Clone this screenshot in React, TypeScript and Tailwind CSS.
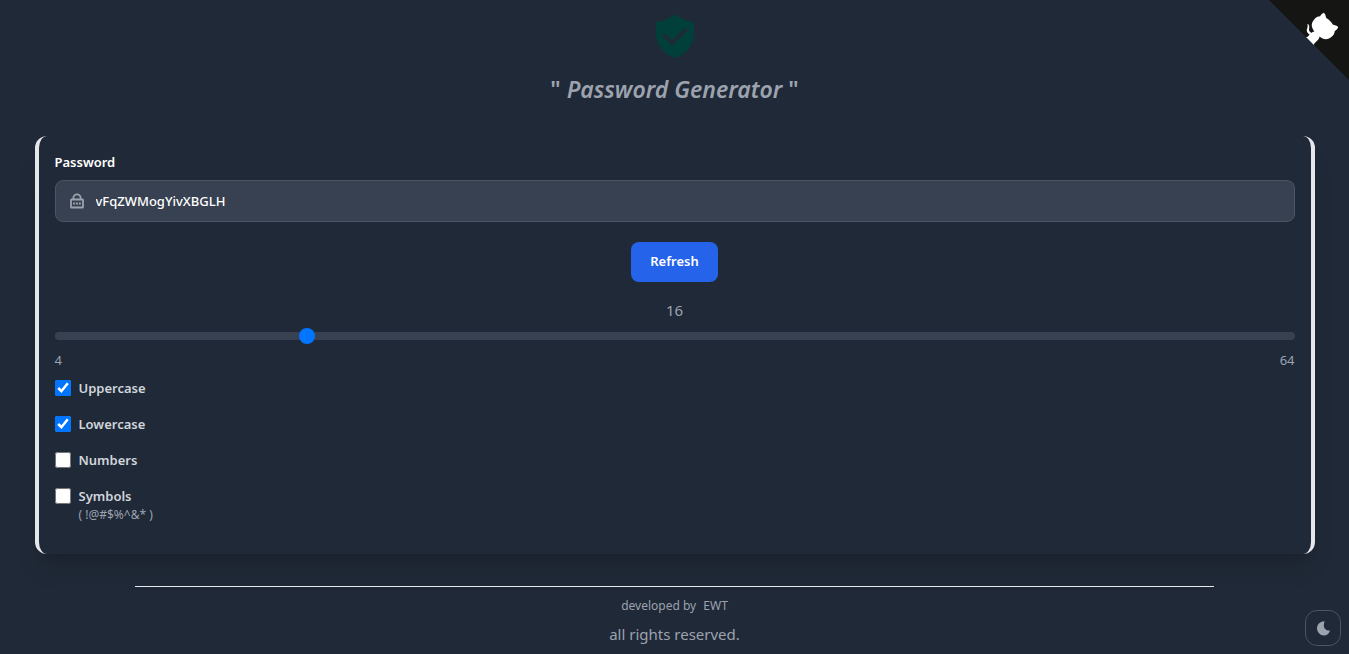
import { useState } from "react";

const UPPER = "ABCDEFGHIJKLMNOPQRSTUVWXYZ";
const LOWER = "abcdefghijklmnopqrstuvwxyz";
const DIGITS = "0123456789";
const SYMBOLS = "!@#$%^&*";

type OptionKey = "uppercase" | "lowercase" | "numbers" | "symbols";
type Options = Record<OptionKey, boolean>;

const OPTIONS: { key: OptionKey; label: string; hint?: string }[] = [
  { key: "uppercase", label: "Uppercase" },
  { key: "lowercase", label: "Lowercase" },
  { key: "numbers", label: "Numbers" },
  { key: "symbols", label: "Symbols", hint: "( !@#$%^&* )" },
];

function generate(length: number, options: Options) {
  const pool =
    (options.uppercase ? UPPER : "") +
    (options.lowercase ? LOWER : "") +
    (options.numbers ? DIGITS : "") +
    (options.symbols ? SYMBOLS : "");
  if (!pool) return "";
  return Array.from({ length }, () => pool[Math.floor(Math.random() * pool.length)]).join("");
}

function GithubCorner() {
  return (
    <a href="#github" aria-label="View source on GitHub" className="absolute top-0 right-0">
      <svg width="80" height="80" viewBox="0 0 250 250" className="fill-[#151513] text-white" aria-hidden="true">
        <path d="M0,0 L115,115 L130,115 L142,142 L250,250 L250,0 Z" />
        <path
          fill="currentColor"
          d="M128.3,109.0 C113.8,99.7 119.0,89.6 119.0,89.6 C122.0,82.7 120.5,78.6 120.5,78.6 C119.2,72.0 123.4,76.3 123.4,76.3 C127.3,80.9 125.5,87.3 125.5,87.3 C122.9,97.6 130.6,101.9 134.4,103.2"
        />
        <path
          fill="currentColor"
          d="M115.0,115.0 C114.9,115.1 118.7,116.5 119.8,115.4 L133.7,101.6 C136.9,99.2 139.9,98.4 142.2,98.6 C133.8,88.0 127.5,74.4 143.8,58.0 C148.5,53.4 154.0,51.2 159.7,51.0 C160.3,49.4 163.2,43.6 171.4,40.1 C171.4,40.1 176.1,42.5 178.8,56.2 C183.1,58.6 187.2,61.8 190.9,65.4 C194.5,69.0 197.7,73.2 200.1,77.6 C213.8,80.2 216.3,84.9 216.3,84.9 C212.7,93.1 206.9,96.0 205.4,96.6 C205.1,102.4 203.0,107.8 198.3,112.5 C181.9,128.9 168.3,122.5 157.7,114.1 C157.9,116.9 156.7,120.9 152.7,124.9 L141.0,136.5 C139.8,137.7 141.6,141.9 141.8,141.8 Z"
        />
      </svg>
    </a>
  );
}

function ShieldIcon() {
  return (
    <svg width="38" height="44" viewBox="0 0 38 44" className="text-[#003f3a]" aria-hidden="true">
      <path
        fill="currentColor"
        fillRule="evenodd"
        d="M19 0 C24 4 31 7.6 37 8 C37.8 8 38 8.6 38 9.2 V19 C38 31 30 40.5 19 44 C8 40.5 0 31 0 19 V9.2 C0 8.6 .2 8 1 8 C7 7.6 14 4 19 0 Z M28.1 14.4 L15.8 26.4 L10.1 20.4 C9.3 19.6 8.2 19.6 7.4 20.4 C6.7 21.2 6.7 22.3 7.4 23.1 L15.8 31.4 L30.6 17.1 C31.4 16.3 31.4 15.2 30.6 14.4 C29.8 13.7 28.8 13.7 28.1 14.4 Z"
      />
    </svg>
  );
}

function LockIcon() {
  return (
    <svg width="14" height="16" viewBox="0 0 14 16" fill="none" stroke="currentColor" strokeWidth="1.8" aria-hidden="true">
      <rect x="1" y="6.5" width="12" height="8" rx="0.6" />
      <path d="M3.4 6.5 V4.8 A3.6 3.4 0 0 1 10.6 4.8 V6.5" />
      <path d="M3.2 10.5 h1.9 M6.05 10.5 h1.9 M8.9 10.5 h1.9" />
    </svg>
  );
}

function MoonIcon() {
  return (
    <svg width="13" height="15" viewBox="0 0 13 15" fill="currentColor" aria-hidden="true">
      <path d="M7.8 .2 C3.4 .1 0 3.3 0 7.3 C0 11.3 3.2 14.5 7 14.5 C9.8 14.5 12.1 12.7 13 9.5 C9.4 9.9 6.8 7.4 6.8 4.4 C6.8 2.7 7.2 1.3 7.8 .2 Z" />
    </svg>
  );
}

export default function App() {
  const [length, setLength] = useState(16);
  const [options, setOptions] = useState<Options>({
    uppercase: true,
    lowercase: true,
    numbers: false,
    symbols: false,
  });
  const [password, setPassword] = useState("vFqZWMogYivXBGLH");

  const changeLength = (next: number) => {
    setLength(next);
    setPassword(generate(next, options));
  };

  const toggle = (key: OptionKey) => {
    const next = { ...options, [key]: !options[key] };
    setOptions(next);
    setPassword(generate(length, next));
  };

  return (
    <div className="relative min-h-screen bg-[#202937] pt-3.5 font-['Segoe_UI','Noto_Sans',sans-serif] text-[#9ca3af]">
      <GithubCorner />

      <header className="flex flex-col items-center gap-[15px]">
        <ShieldIcon />
        <h1 className="text-[23px] leading-8 font-semibold">
          " <em>Password Generator</em> "
        </h1>
      </header>

      <main className="mx-auto mt-[31px] max-w-7xl rounded-xl border-x-4 border-gray-200 px-4 pt-4 pb-[31px] shadow-xl">
        <label htmlFor="password" className="block text-[13px] leading-5 font-semibold text-white">
          Password
        </label>
        <div className="mt-2 flex h-[42px] items-center gap-3 rounded-lg border border-[#4b5563] bg-[#384151] px-3.5">
          <LockIcon />
          <input
            id="password"
            type="text"
            readOnly
            value={password}
            className="min-w-0 flex-1 bg-transparent text-[13px] leading-5 font-medium text-white outline-none"
          />
        </div>

        <div className="mt-5 flex justify-center">
          <button
            type="button"
            onClick={() => setPassword(generate(length, options))}
            className="h-10 rounded-lg bg-[#2563eb] px-[19px] text-[13px] font-semibold text-white"
          >
            Refresh
          </button>
        </div>

        <label htmlFor="length" className="mt-4 block text-center text-[15px] leading-6">
          {length}
        </label>
        <input
          id="length"
          type="range"
          min={4}
          max={64}
          value={length}
          onChange={(event) => changeLength(Number(event.target.value))}
          className="mt-2.5 block h-2 w-full cursor-pointer appearance-none rounded-lg bg-[#384151] [&::-webkit-slider-thumb]:size-4 [&::-webkit-slider-thumb]:rounded-full [&::-webkit-slider-thumb]:bg-[#0075ff] [&::-webkit-slider-thumb]:appearance-none"
        />
        <div className="mt-2.5 flex justify-between text-[13px] leading-5">
          <span>4</span>
          <span>64</span>
        </div>

        <div className="mt-2 flex flex-col gap-4">
          {OPTIONS.map(({ key, label, hint }) => (
            <div key={key} className="flex gap-2">
              <input
                id={key}
                type="checkbox"
                checked={options[key]}
                onChange={() => toggle(key)}
                className="mt-0.5 size-4 accent-[#0075ff]"
              />
              <div>
                <label htmlFor={key} className="block text-[13px] leading-5 font-semibold text-gray-300">
                  {label}
                </label>
                {hint && <p className="mt-px text-xs leading-4">{hint}</p>}
              </div>
            </div>
          ))}
        </div>
      </main>

      <footer className="mt-8 text-center">
        <hr className="mx-auto w-4/5 border-gray-200" />
        <p className="mt-[9px] text-xs leading-5">
          developed by{" "}
          <a href="#ewt" className="ml-1">
            EWT
          </a>
        </p>
        <p className="mt-1.5 text-[15px] leading-6">all rights reserved.</p>
      </footer>

      <button
        type="button"
        aria-label="Toggle dark mode"
        className="fixed right-2 bottom-2 flex size-9 items-center justify-center rounded-xl border border-[#4b5563]"
      >
        <MoonIcon />
      </button>
    </div>
  );
}
